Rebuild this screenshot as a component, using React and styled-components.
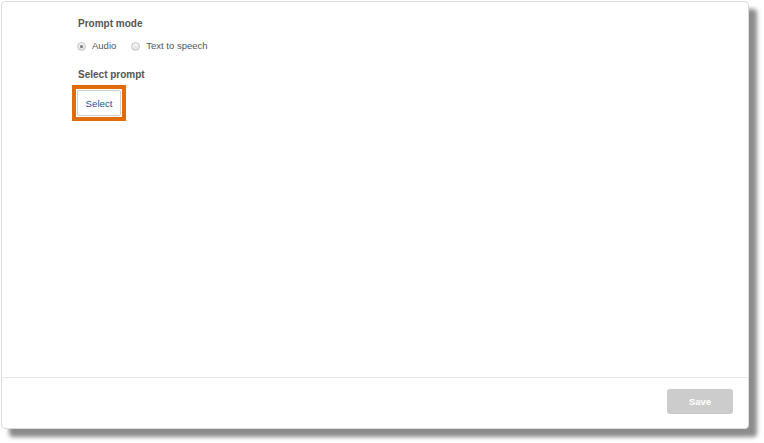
import React from "react";
import styled, { createGlobalStyle } from "styled-components";

const Global = createGlobalStyle`
  html, body { margin: 0; padding: 0; background: #ffffff; }
  body { font-family: "Liberation Sans", Arial, sans-serif; }
  * { box-sizing: border-box; }
`;

const Page = styled.div`
  width: 764px;
  height: 443px;
  padding: 1px 0 0 1px;
  background: #ffffff;
`;

const Card = styled.div`
  width: 748px;
  height: 428px;
  background: #ffffff;
  border: 1px solid #dcdcdc;
  border-radius: 4px;
  box-shadow: 8px 8px 4px rgba(0, 0, 0, 0.45);
  display: flex;
  flex-direction: column;
`;

const Body = styled.div`
  flex: 1;
  display: flex;
  flex-direction: column;
  align-items: flex-start;
  padding: 16px 0 0 75px;
`;

const Heading = styled.div`
  font-size: 10px;
  line-height: 12px;
  font-weight: 700;
  color: #555555;
  margin: ${(p) => p.$mt || 0}px 0 0 1px;
`;

const RadioRow = styled.div`
  display: flex;
  align-items: center;
  margin-top: 10px;
  height: 12px;
`;

const RadioItem = styled.label`
  display: flex;
  align-items: center;
  margin-right: 15px;
  font-size: 9.5px;
  color: #555555;
  line-height: 12px;
`;

const RadioCircle = styled.span`
  width: 9px;
  height: 9px;
  border-radius: 50%;
  border: 1px solid #c4c4c4;
  background: linear-gradient(#f4f4f4, #e2e2e2);
  margin-right: 6px;
  display: flex;
  align-items: center;
  justify-content: center;
  &::after {
    content: "";
    width: 3px;
    height: 3px;
    border-radius: 50%;
    background: ${(p) => (p.$checked ? "#777777" : "transparent")};
  }
`;

const FocusRing = styled.div`
  margin: 4px 0 0 -5px;
  border: 4px solid #e36c0a;
  padding: 1px;
  display: flex;
`;

const SelectButton = styled.button`
  width: 44px;
  height: 26px;
  padding: 0;
  border: 1px solid #cfcfcf;
  border-radius: 2px;
  background: #ffffff;
  color: #1a5296;
  font-family: "Liberation Sans", Arial, sans-serif;
  font-size: 9.7px;
`;

const Footer = styled.div`
  height: 51px;
  border-top: 1px solid #e6e6e6;
  display: flex;
  justify-content: flex-end;
  align-items: flex-start;
  padding: 11px 15px 0 0;
`;

const SaveButton = styled.button`
  width: 66px;
  height: 25px;
  border: none;
  border-radius: 3px;
  background: #cccccc;
  color: #ffffff;
  font-family: "Liberation Sans", Arial, sans-serif;
  font-weight: 700;
  font-size: 9.5px;
  padding: 0;
`;

export default function App() {
  return (
    <>
      <Global />
      <Page>
        <Card>
          <Body>
            <Heading>Prompt mode</Heading>
            <RadioRow>
              <RadioItem>
                <RadioCircle $checked />
                Audio
              </RadioItem>
              <RadioItem>
                <RadioCircle />
                Text to speech
              </RadioItem>
            </RadioRow>
            <Heading $mt={17}>Select prompt</Heading>
            <FocusRing>
              <SelectButton>Select</SelectButton>
            </FocusRing>
          </Body>
          <Footer>
            <SaveButton>Save</SaveButton>
          </Footer>
        </Card>
      </Page>
    </>
  );
}
